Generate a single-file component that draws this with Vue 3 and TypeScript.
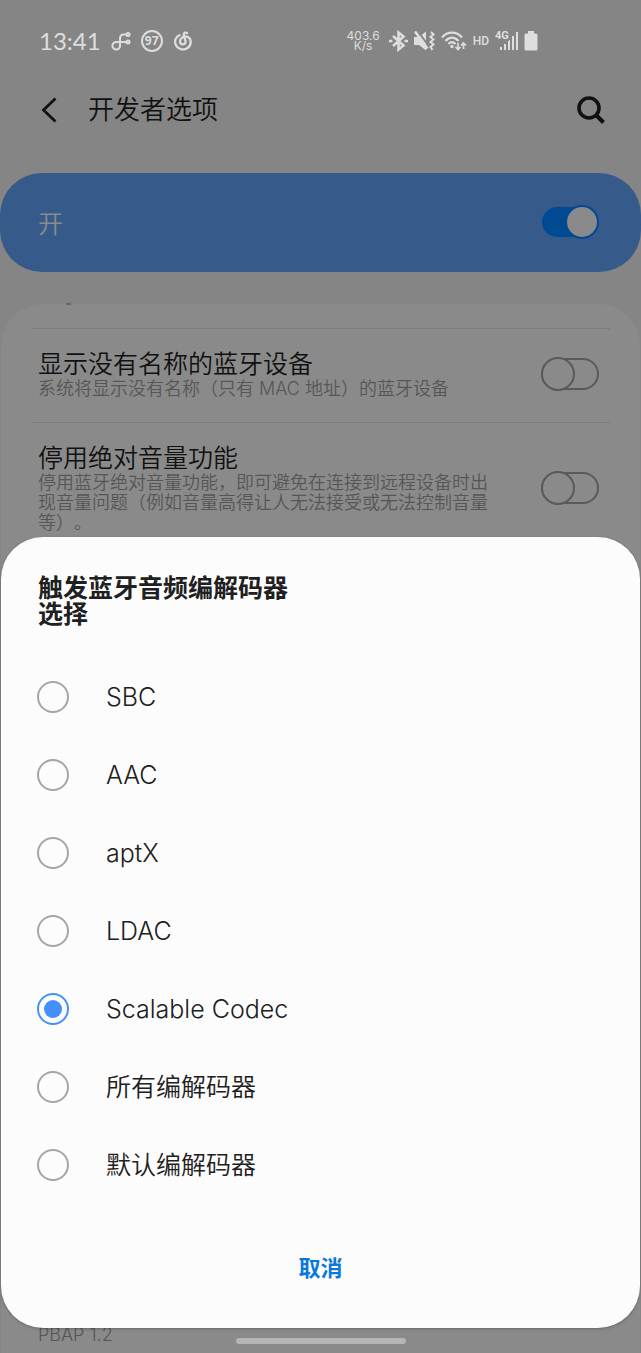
<script setup lang="ts">
import { ref } from 'vue'

interface Setting {
  id: string
  title: string
  summary: string
  on: boolean
}

const enabled = ref(true)
const settings = ref<Setting[]>([
  { id: 'unnamed', title: '显示没有名称的蓝牙设备', summary: '系统将显示没有名称（只有 MAC 地址）的蓝牙设备', on: false },
  {
    id: 'volume',
    title: '停用绝对音量功能',
    summary: '停用蓝牙绝对音量功能，即可避免在连接到远程设备时出现音量问题（例如音量高得让人无法接受或无法控制音量等）。',
    on: false,
  },
])
const codecs: string[] = ['SBC', 'AAC', 'aptX', 'LDAC', 'Scalable Codec', '所有编解码器', '默认编解码器']
const selected = ref('Scalable Codec')
</script>

<template>
  <div class="screen">
    <div class="status">
      <div class="status-left">
        <span class="time">13:41</span>
        <svg width="20" height="20" viewBox="0 0 20 20" fill="none" stroke="currentColor" stroke-width="2">
          <path d="M16 3.500H12.500C9.500 3.500 9 5.500 9 8V14.500A3.800 3.800 0 1 1 5.200 11H16" />
          <circle cx="17" cy="3.500" r="1.500" /><circle cx="17" cy="11" r="1.500" />
        </svg>
        <span class="level">97</span>
        <svg width="20" height="20" viewBox="0 0 20 20" fill="none" stroke="currentColor" stroke-width="2.300" stroke-linecap="round">
          <path d="M6.500 4.300C2.500 6 1.500 10 2.500 13C4 18 10 20 14.500 17C19 14 18.500 7.500 14.500 5.800C11 4.500 7 7 7 10.800C7.300 14 12.500 14.200 12.600 10.800C12.600 8.500 10.500 5.500 10.800 3.200C11 1.500 12.800 1.200 14 2" />
        </svg>
      </div>
      <div class="status-right">
        <span class="speed">403.6<br />K/s</span>
        <svg width="19" height="22" viewBox="0 0 19 22" fill="none" stroke="currentColor" stroke-width="2.600">
          <path d="M4 6L14.500 15.500L9.500 19.500V2.500L14.500 6.500L4 16" />
          <path d="M0 11H3.500M15.500 11H19" />
        </svg>
        <svg width="21" height="22" viewBox="0 0 21 22" fill="none" stroke="currentColor" stroke-width="2">
          <path d="M0 7H5L12 1.500V20.500L5 15H0Z" fill="currentColor" stroke="none" />
          <path d="M3 0L15 16.500" stroke="#858585" stroke-width="2" />
          <path d="M1 1.500L13.500 18.500" stroke-width="2.600" />
          <path d="M17 2L19.500 4.500L16.500 7L19.500 9.500L16.500 12L19.500 14.500L16.500 17L18.500 20" />
        </svg>
        <svg width="26" height="22" viewBox="0 0 26 22" fill="none" stroke="currentColor" stroke-width="2.200">
          <path d="M1 7.500C6.500 1 15.500 1 21 7.500M4.500 11C8.500 6.500 13.500 6.500 17.500 11M7.500 14C9.500 11.500 12 11.500 14.500 14" />
          <circle cx="11" cy="16.500" r="1.700" fill="currentColor" stroke="none" />
          <path d="M17 13V19M14.500 17L17 19.500L19.500 17M22.500 19V13M20 15.500L22.500 13L25 15.500" stroke-width="1.700" />
        </svg>
        <span class="hd">HD</span>
        <span class="signal">
          <svg width="23" height="22" viewBox="0 0 23 22" fill="none" stroke="currentColor" stroke-width="2">
            <path d="M6 17V20M10 14V20M14 10V20M18 6V20M22 2V20" />
          </svg>
          <span class="network">4G</span>
        </span>
        <svg width="14" height="22" viewBox="0 0 14 22" fill="currentColor">
          <path d="M4 1H10V3.500H12A1.500 1.500 0 0 1 13.500 5V19A1.500 1.500 0 0 1 12 20.500H2A1.500 1.500 0 0 1 .5 19V5A1.500 1.500 0 0 1 2 3.500H4Z" />
        </svg>
      </div>
    </div>

    <header class="bar">
      <button class="icon-button" type="button" aria-label="返回">
        <svg width="18" height="26" viewBox="0 0 18 26" fill="none" stroke="currentColor" stroke-width="2.800">
          <path d="M15.500 1.500L3.500 13L15.500 24.500" />
        </svg>
      </button>
      <h1>开发者选项</h1>
      <button class="icon-button" type="button" aria-label="搜索">
        <svg width="30" height="30" viewBox="0 0 30 30" fill="none" stroke="currentColor" stroke-width="3.600">
          <circle cx="13" cy="13" r="10" />
          <path d="M20 20L27.500 27.500" stroke-width="4" />
        </svg>
      </button>
    </header>

    <label class="master">
      <span>开</span>
      <input v-model="enabled" class="switch" type="checkbox" role="switch" />
    </label>

    <main class="card">
      <div class="row" v-for="item in settings" :key="item.id">
        <label class="copy" :for="item.id">
          <span class="title">{{ item.title }}</span>
          <span class="summary">{{ item.summary }}</span>
        </label>
        <input :id="item.id" v-model="item.on" class="switch" type="checkbox" role="switch" />
      </div>
      <p class="summary last">PBAP 1.2</p>
    </main>

    <section class="dialog" role="dialog" aria-modal="true" aria-labelledby="dialog-title">
      <h2 id="dialog-title">触发蓝牙音频编解码器<br />选择</h2>
      <div class="options">
        <label v-for="codec in codecs" :key="codec" class="option">
          <input v-model="selected" type="radio" name="codec" :value="codec" />
          <span>{{ codec }}</span>
        </label>
      </div>
      <button class="cancel" type="button">取消</button>
    </section>
    <div class="home-pill"></div>
  </div>
</template>

<style>
body {
  margin: 0;
  background: #858585;
}
</style>

<style scoped>
*,
*::before,
*::after {
  box-sizing: border-box;
}
.screen {
  position: relative;
  display: flex;
  flex-direction: column;
  min-height: 100vh;
  overflow: hidden;
  background: #858585;
  color: #111;
  font-family: Inter, "Noto Sans CJK SC", sans-serif;
  font-weight: 350;
  text-spacing-trim: space-all;
}
button {
  padding: 0;
  border: 0;
  background: none;
  color: inherit;
  font: inherit;
}
svg {
  display: block;
  flex: none;
}
.status {
  display: flex;
  align-items: center;
  justify-content: space-between;
  height: 81px;
  padding: 0 103px 0 39px;
  color: #dedede;
}
.status-left {
  display: flex;
  align-items: center;
  gap: 10px;
}
.status-right {
  display: flex;
  align-items: center;
  gap: 6px;
}
.time {
  font-family: Lato, sans-serif;
  font-size: 24px;
  font-weight: 400;
  line-height: 28px;
}
.level {
  display: grid;
  place-items: center;
  width: 22px;
  height: 22px;
  border: 2px solid currentColor;
  border-radius: 50%;
  font: bold 12px/18px "Open Sans", sans-serif;
}
.speed {
  margin-right: 3px;
  font-size: 12px;
  font-weight: 400;
  line-height: 10px;
  text-align: center;
}
.hd {
  font: 500 12px/22px Roboto, sans-serif;
}
.signal {
  position: relative;
}
.network {
  position: absolute;
  top: 0;
  left: 0;
  background: #858585;
  font: bold 11px/11px Roboto, sans-serif;
}
.bar {
  display: flex;
  align-items: center;
  height: 58px;
  padding: 0 35px 0 40px;
}
.bar h1 {
  flex: 1;
  margin: 0 0 0 30px;
  font-size: 26px;
  font-weight: 350;
  line-height: 32px;
}
.icon-button {
  display: block;
}
.master {
  display: flex;
  align-items: center;
  justify-content: space-between;
  height: 99px;
  margin-top: 34px;
  padding: 0 42px 2px 38px;
  border-radius: 42px;
  background: #365b8b;
  color: #8a8a8a;
  font-size: 25px;
}
.switch {
  appearance: none;
  position: relative;
  flex: none;
  width: 58px;
  height: 34px;
  margin: 0;
}
.switch::before {
  content: "";
  position: absolute;
  inset: 1px 0;
  border: 2px solid #5a5a5a;
  border-radius: 16px;
}
.switch::after {
  content: "";
  position: absolute;
  top: 0;
  left: 0;
  width: 34px;
  height: 34px;
  border: 2px solid #5a5a5a;
  border-radius: 50%;
  background: #8a8a8a;
}
.switch:checked::before {
  inset: 2px 1px;
  border: 0;
  background: #004a94;
}
.switch:checked::after {
  left: 24px;
  border-color: #004a94;
}
.card {
  position: relative;
  display: flex;
  flex: 1;
  flex-direction: column;
  margin: 32px 1px 0;
  padding: 24px 30px 8px;
  border-radius: 42px 42px 0 0;
  background: #8a8a8a;
}
.card::before {
  content: "";
  position: absolute;
  top: -1px;
  left: 65px;
  width: 5px;
  height: 2px;
  border-radius: 1px;
  background: #666;
}
.row {
  display: flex;
  align-items: center;
  justify-content: space-between;
  padding: 20px 11px 23px 7px;
  border-top: 1px solid #7c7c7c;
}
.copy {
  display: block;
  max-width: 458px;
}
.title {
  display: block;
  font-size: 25px;
  line-height: 30px;
}
.summary {
  display: block;
  color: #565656;
  font-size: 18px;
  line-height: 20px;
}
.last {
  margin: auto 0 0 7px;
}
.dialog {
  position: absolute;
  right: 1px;
  bottom: 25px;
  left: 1px;
  display: flex;
  flex-direction: column;
  padding: 38px 36px 40px;
  border-radius: 42px;
  background: #fcfcfc;
  box-shadow: 0 1px 3px #00000040;
  color: #202020;
}
.dialog h2 {
  margin: 0 0 31px 1px;
  font-size: 25px;
  font-weight: 700;
  line-height: 26px;
}
.option {
  display: flex;
  align-items: center;
  gap: 37px;
  height: 78px;
  font-size: 25px;
  line-height: 32px;
}
.option input {
  appearance: none;
  display: grid;
  place-items: center;
  width: 32px;
  height: 32px;
  margin: 0;
  border: 2px solid #a5a5a5;
  border-radius: 50%;
}
.option input:checked {
  border-color: #4390fa;
}
.option input:checked::before {
  content: "";
  width: 18px;
  height: 18px;
  border-radius: 50%;
  background: #4390fa;
}
.cancel {
  align-self: center;
  height: 44px;
  margin-top: 40px;
  color: #0a78d8;
  font-size: 22px;
  font-weight: 700;
}
.home-pill {
  position: absolute;
  bottom: 9px;
  left: 50%;
  width: 170px;
  height: 6px;
  margin-left: -85px;
  border-radius: 3px;
  background: #b5b5b5;
}
</style>
